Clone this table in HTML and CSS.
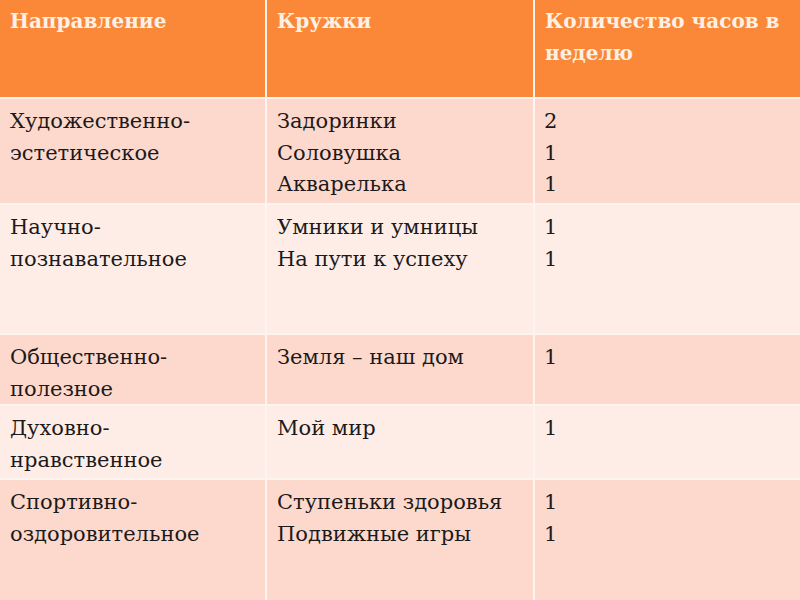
FILE: index.html
```html
<!DOCTYPE html>
<html lang="ru">
<head>
<meta charset="utf-8">
<link rel="stylesheet" href="styles.css">
</head>
<body>
<div class="table">
  <div class="cell head">Направление</div>
  <div class="cell head">Кружки</div>
  <div class="cell head">Количество часов в неделю</div>

  <div class="cell odd">Художественно-<br>эстетическое</div>
  <div class="cell odd">Задоринки<br>Соловушка<br>Акварелька</div>
  <div class="cell odd num">2<br>1<br>1</div>

  <div class="cell even">Научно-<br>познавательное</div>
  <div class="cell even">Умники и умницы<br>На пути к успеху</div>
  <div class="cell even num">1<br>1</div>

  <div class="cell odd">Общественно-<br>полезное</div>
  <div class="cell odd">Земля – наш дом</div>
  <div class="cell odd num">1</div>

  <div class="cell even">Духовно-<br>нравственное</div>
  <div class="cell even">Мой мир</div>
  <div class="cell even num">1</div>

  <div class="cell odd">Спортивно-<br>оздоровительное</div>
  <div class="cell odd">Ступеньки здоровья<br>Подвижные игры</div>
  <div class="cell odd num">1<br>1</div>
</div>
</body>
</html>
```

FILE: styles.css
```css
html, body {
  margin: 0;
  padding: 0;
  background: #ffffff;
}
body {
  width: 800px;
  height: 600px;
  overflow: hidden;
}
.table {
  display: grid;
  grid-template-columns: 265px 266px 265px;
  grid-template-rows: 97px 104px 128px 69px 72px 120px;
  column-gap: 2px;
  row-gap: 2px;
  width: 800px;
  height: 600px;
  background: #fdf3ef;
  font-family: "DejaVu Serif", "Liberation Serif", serif;
  font-size: 21px;
  line-height: 31.5px;
  color: #1c1a1a;
}
.cell {
  padding: 6px 10px 0 10px;
  box-sizing: border-box;
}
.odd, .even {
  padding-top: 7px;
}
.head {
  background: #fb8838;
  color: #fdf1e6;
  font-weight: bold;
  font-size: 20px;
}
.odd {
  background: #fdd9cd;
}
.even {
  background: #feede7;
}
.num {
  padding-left: 9px;
}
```
